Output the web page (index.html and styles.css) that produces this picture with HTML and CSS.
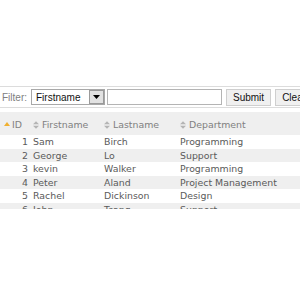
FILE: index.html
```html
<!DOCTYPE html>
<html>
<head>
<meta charset="utf-8">
<link rel="stylesheet" href="styles.css">
</head>
<body>
<div class="page">
  <div class="toolbar">
    <span class="label">Filter:</span>
    <div class="select">
      <span class="select-text">Firstname</span>
      <span class="select-btn"><svg width="7" height="4" viewBox="0 0 7 4"><path d="M0 0H7L3.5 4Z" fill="#000"/></svg></span>
    </div>
    <input class="input" type="text" value="">
    <button class="btn">Submit</button>
    <button class="btn">Clear</button>
  </div>
  <div class="grid">
    <div class="row head">
      <div class="cell id"><svg class="asc" width="6" height="4" viewBox="0 0 6 4"><path d="M0 4L3 0L6 4Z" fill="#f0b030"/></svg>ID</div>
      <div class="cell"><svg class="sort" width="6" height="8" viewBox="0 0 6 8"><path d="M0 3.3L3 0.3L6 3.3Z M0 4.7L3 7.7L6 4.7Z" fill="#b4b4b4"/></svg>Firstname</div>
      <div class="cell"><svg class="sort" width="6" height="8" viewBox="0 0 6 8"><path d="M0 3.3L3 0.3L6 3.3Z M0 4.7L3 7.7L6 4.7Z" fill="#b4b4b4"/></svg>Lastname</div>
      <div class="cell"><svg class="sort" width="6" height="8" viewBox="0 0 6 8"><path d="M0 3.3L3 0.3L6 3.3Z M0 4.7L3 7.7L6 4.7Z" fill="#b4b4b4"/></svg>Department</div>
    </div>
    <div class="row"><div class="cell num">1</div><div class="cell">Sam</div><div class="cell">Birch</div><div class="cell">Programming</div></div>
    <div class="row alt"><div class="cell num">2</div><div class="cell">George</div><div class="cell">Lo</div><div class="cell">Support</div></div>
    <div class="row"><div class="cell num">3</div><div class="cell">kevin</div><div class="cell">Walker</div><div class="cell">Programming</div></div>
    <div class="row alt"><div class="cell num">4</div><div class="cell">Peter</div><div class="cell">Aland</div><div class="cell">Project Management</div></div>
    <div class="row"><div class="cell num">5</div><div class="cell">Rachel</div><div class="cell">Dickinson</div><div class="cell">Design</div></div>
    <div class="row alt"><div class="cell num">6</div><div class="cell">John</div><div class="cell">Tsang</div><div class="cell">Support</div></div>
  </div>
</div>
</body>
</html>
```
FILE: styles.css
```css
html, body {
  margin: 0;
  padding: 0;
  background: #fff;
}
.page {
  padding-top: 86px;
  width: 300px;
  overflow: hidden;
}
.toolbar {
  display: flex;
  align-items: center;
  height: 20px;
  border-top: 1px solid #dcdcdc;
  border-bottom: 1px solid #dcdcdc;
  font-family: "Liberation Sans", Arial, sans-serif;
  font-size: 10px;
  color: #333;
  white-space: nowrap;
  padding-left: 2px;
}
.label {
  color: #808080;
  width: 29px;
  flex: none;
}
.select {
  display: flex;
  align-items: center;
  box-sizing: border-box;
  width: 74px;
  height: 16px;
  border: 1px solid #a8a8a8;
  background: #fff;
  flex: none;
}
.select-text {
  flex: 1;
  padding-left: 4px;
  color: #111;
}
.select-btn {
  display: flex;
  align-items: center;
  justify-content: center;
  box-sizing: border-box;
  width: 15px;
  height: 14px;
  background: #e2e2e2;
  border: 1px solid #9a9a9a;
}
.input {
  box-sizing: border-box;
  width: 115px;
  height: 16px;
  margin: 0 0 0 2px;
  padding: 0;
  border: 1px solid #b4b4b4;
  flex: none;
}
.btn {
  box-sizing: border-box;
  height: 17px;
  margin: 0 0 0 4px;
  padding: 0 6px;
  border: 1px solid #cfcfcf;
  background: #f0f0f0;
  font-family: "Liberation Sans", Arial, sans-serif;
  font-size: 10px;
  color: #111;
  flex: none;
}
.grid {
  margin-top: 4px;
  height: 97px;
  overflow: hidden;
  font-family: "DejaVu Sans", Verdana, sans-serif;
  font-size: 9.4px;
  color: #5a5a5a;
}
.row {
  display: grid;
  grid-template-columns: 31px 71px 76px 1fr;
  height: 13.6px;
  line-height: 13.6px;
  white-space: nowrap;
}
.row.alt {
  background: #efefef;
}
.row.head {
  box-sizing: border-box;
  height: 23px;
  padding-top: 3px;
  line-height: 20px;
  background: #efefef;
  color: #808080;
}
.cell {
  padding-left: 2px;
  overflow: hidden;
}
.cell.num {
  text-align: right;
  padding: 0 3px 0 0;
}
.cell.id {
  padding-left: 4px;
}
.asc {
  margin-right: 2px;
  vertical-align: 2px;
}
.sort {
  margin-right: 3px;
  vertical-align: -1px;
}
```
